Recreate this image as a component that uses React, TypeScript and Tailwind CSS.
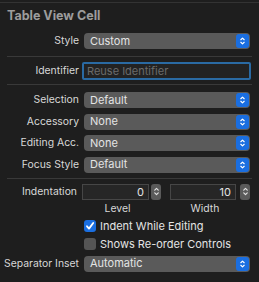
import React from "react";

function Chevrons({ className = "" }: { className?: string }) {
  return (
    <svg viewBox="0 0 8 12" className={className} fill="none" stroke="currentColor" strokeWidth="1.4" strokeLinecap="round" strokeLinejoin="round">
      <path d="M2 4.5 L4 2.5 L6 4.5" />
      <path d="M2 7.5 L4 9.5 L6 7.5" />
    </svg>
  );
}

function Popup({ value }: { value: string }) {
  return (
    <div className="flex h-[16px] flex-1 items-center rounded-[4px] bg-[#5a5a5a] pl-[6px] pr-[1px] text-[#e4e4e4]">
      <span className="flex-1 text-[11px] leading-none">{value}</span>
      <div className="flex h-[14px] w-[13px] items-center justify-center rounded-[3px] bg-[#1a6ee0] text-white">
        <Chevrons className="h-[10px] w-[7px]" />
      </div>
    </div>
  );
}

function Row({ label, children, className = "" }: { label: string; children: React.ReactNode; className?: string }) {
  return (
    <div className={`flex h-[16px] items-center ${className}`}>
      <div className="flex w-[79px] justify-end whitespace-nowrap text-[#d8d8d8]">{label}</div>
      <div className="ml-[5px] mr-[9px] flex flex-1 items-center">{children}</div>
    </div>
  );
}

function Stepper() {
  return (
    <div className="flex h-[16px] w-[10px] items-center justify-center rounded-[3px] bg-[#5a5a5a] text-[#e0e0e0]">
      <Chevrons className="h-[11px] w-[7px]" />
    </div>
  );
}

function NumberField({ value, width }: { value: string; width: string }) {
  return (
    <div className={`flex h-[16px] ${width} items-center justify-end border border-[#464646] bg-[#262626] pr-[4px] text-[11px] text-[#e4e4e4]`}>
      {value}
    </div>
  );
}

function Checkbox({ checked, label }: { checked: boolean; label: string }) {
  return (
    <div className="ml-[84px] flex h-[12px] items-center">
      {checked ? (
        <div className="flex h-[12px] w-[12px] items-center justify-center rounded-[3px] bg-[#1a6ee0]">
          <svg viewBox="0 0 12 12" className="h-[12px] w-[12px]" fill="none" stroke="white" strokeWidth="1.8" strokeLinecap="round" strokeLinejoin="round">
            <path d="M3 6.3 L5 8.6 L9.2 3" />
          </svg>
        </div>
      ) : (
        <div className="h-[12px] w-[12px] rounded-[3px] bg-[#555555]" />
      )}
      <span className="ml-[4px] text-[11px] text-[#e4e4e4]">{label}</span>
    </div>
  );
}

export default function App() {
  return (
    <div
      className="h-[282px] w-[259px] overflow-hidden bg-[#1e1e1e] text-[10.4px] leading-[16px]"
      style={{ fontFamily: "Inter, 'Liberation Sans', sans-serif" }}
    >
      <div className="h-[2px]" />
      <div className="h-px bg-[#333333]" />
      <div className="ml-[7px] mt-[5px] text-[12.5px] font-bold leading-[15px] text-[#9c9c9c]">Table View Cell</div>

      <Row label="Style" className="mt-[10px]">
        <Popup value="Custom" />
      </Row>

      <div className="mx-[7px] mt-[7px] h-px bg-[#393939]" />

      <Row label="Identifier" className="mt-[5px] h-[18px]">
        <div className="-ml-[2px] -mr-[1px] flex h-[18px] flex-1 items-center rounded-[2px] border-[2px] border-[#2a6aa3] bg-[#222222] pl-[3px] text-[11px] text-[#6b6b6b]">
          Reuse Identifier
        </div>
      </Row>

      <div className="mx-[7px] mt-[4px] h-px bg-[#393939]" />

      <div className="mt-[7px] flex flex-col gap-[5.5px]">
        <Row label="Selection">
          <Popup value="Default" />
        </Row>
        <Row label="Accessory">
          <Popup value="None" />
        </Row>
        <Row label="Editing Acc.">
          <Popup value="None" />
        </Row>
        <Row label="Focus Style">
          <Popup value="Default" />
        </Row>
      </div>

      <div className="mx-[7px] mt-[5px] h-px bg-[#393939]" />

      <Row label="Indentation" className="mt-[5px]">
        <div className="flex items-center gap-[2px]">
          <NumberField value="0" width="w-[67px]" />
          <Stepper />
        </div>
        <div className="ml-[9px] flex items-center gap-[4px]">
          <NumberField value="10" width="w-[66px]" />
          <Stepper />
        </div>
      </Row>
      <div className="mt-[1px] flex text-[#d8d8d8]">
        <div className="ml-[84px] w-[67px] text-center">Level</div>
        <div className="ml-[21px] w-[66px] text-center">Width</div>
      </div>

      <div className="mt-[3px] flex flex-col gap-[6px]">
        <Checkbox checked label="Indent While Editing" />
        <Checkbox checked={false} label="Shows Re-order Controls" />
      </div>

      <Row label="Separator Inset" className="mt-[6px]">
        <Popup value="Automatic" />
      </Row>
    </div>
  );
}
